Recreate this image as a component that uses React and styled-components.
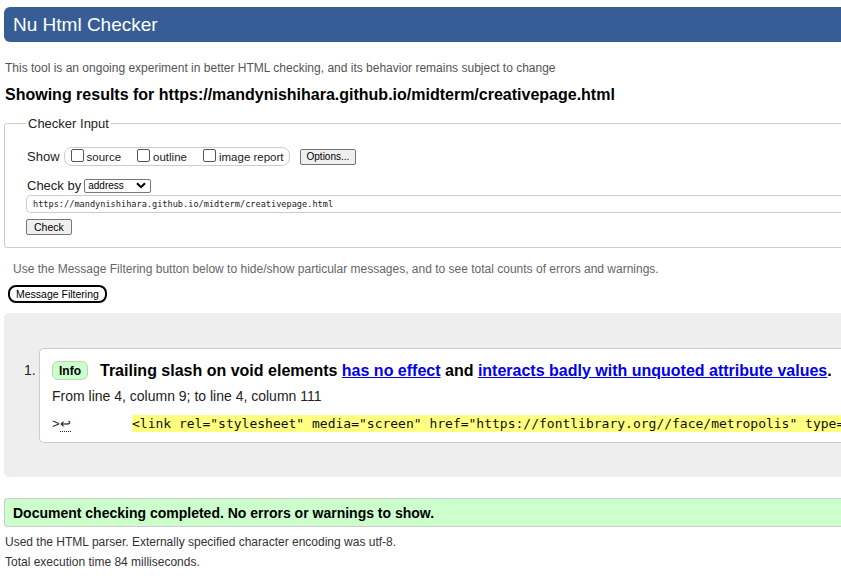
import React from 'react';
import styled, { createGlobalStyle } from 'styled-components';

const GlobalStyle = createGlobalStyle`
  html, body {
    margin: 0;
    padding: 0;
    background: #fff;
    overflow: hidden;
  }
  body {
    font-family: "Liberation Sans", Arial, sans-serif;
    color: #000;
  }
`;

const Page = styled.div`
  width: 1150px;
  padding: 7px 0 0 4px;
`;

const Header = styled.h1`
  margin: 0;
  height: 35px;
  display: flex;
  align-items: center;
  padding-left: 9px;
  background: #365d95;
  border-radius: 6px;
  color: #fff;
  font-size: 19px;
  font-weight: normal;
`;

const Tagline = styled.p`
  margin: 19px 0 0 1px;
  font-size: 12px;
  line-height: 14px;
  color: #555;
`;

const Showing = styled.h2`
  margin: 10px 0 0 1px;
  font-size: 16px;
  line-height: 20px;
  font-weight: bold;
`;

const Fieldset = styled.fieldset`
  margin: 11px 0 0;
  padding: 8px 0 12px 22px;
  border: 1px solid #ccc;
  border-radius: 3px;
`;

const Legend = styled.legend`
  padding: 0 2px;
  margin-left: -1px;
  font-size: 13px;
  line-height: 15px;
  color: #222;
`;

const Row = styled.div`
  display: flex;
  align-items: center;
  gap: ${(p) => p.$gap || 3}px;
  margin-top: ${(p) => p.$top || 0}px;
  font-size: 13px;
  color: #222;
`;

const ShowGroup = styled.div`
  display: flex;
  align-items: center;
  height: 17px;
  padding: 0 5px 0 6px;
  border: 1px solid #ccc;
  border-radius: 8px;
  gap: 16px;
`;

const CheckLabel = styled.label`
  display: flex;
  align-items: center;
  gap: 3px;
  font-size: 11.5px;
  color: #222;
`;

const Box = styled.span`
  width: 11px;
  height: 11px;
  border: 1px solid #555;
  border-radius: 2px;
  background: #fff;
  margin-top: -3px;
`;

const Button = styled.button`
  font-family: "Liberation Sans", Arial, sans-serif;
  font-size: ${(p) => p.$size || 10}px;
  height: 16px;
  padding: 0 ${(p) => p.$pad || 6}px;
  border: 1px solid #767676;
  border-radius: 2px;
  background: #efefef;
  color: #000;
  line-height: 14px;
`;

const Select = styled.div`
  display: flex;
  align-items: center;
  justify-content: space-between;
  box-sizing: border-box;
  width: 67px;
  height: 14px;
  padding: 0 4px 0 3px;
  border: 1px solid #767676;
  border-radius: 2px;
  font-size: 10px;
  color: #000;
`;

const UrlInput = styled.div`
  box-sizing: border-box;
  height: 18px;
  margin: 2px 0 0 -1px;
  padding-left: 6px;
  display: flex;
  align-items: center;
  border: 1px solid #ccc;
  border-right: none;
  border-radius: 5px 0 0 5px;
  font-family: "DejaVu Sans Mono", "Liberation Mono", monospace;
  font-size: 8.6px;
  color: #222;
`;

const CheckRow = styled.div`
  margin: 4px 0 0 -1px;
`;

const Hint = styled.p`
  margin: 14px 0 0 9px;
  font-size: 12px;
  line-height: 14px;
  color: #666;
`;

const FilterButton = styled.button`
  display: block;
  margin: 9px 0 0 4px;
  height: 18px;
  padding: 0 6px;
  border: 2px solid #000;
  border-radius: 8px;
  background: #fff;
  font-family: "Liberation Sans", Arial, sans-serif;
  font-size: 10.5px;
  color: #000;
`;

const Results = styled.div`
  margin-top: 10px;
  padding: 35px 0 34px 20px;
  background: #eee;
  border-radius: 5px 0 0 5px;
  display: flex;
  align-items: flex-start;
`;

const Num = styled.div`
  width: 15px;
  padding-top: 14px;
  font-size: 14px;
  color: #222;
`;

const Message = styled.div`
  flex: 1;
  box-sizing: border-box;
  height: 95px;
  padding: 12px 0 0 12px;
  background: #fff;
  border: 1px solid #ccc;
  border-right: none;
  border-radius: 5px 0 0 5px;
`;

const TitleRow = styled.div`
  display: flex;
  align-items: center;
  gap: 12px;
  font-size: 16px;
  font-weight: bold;
`;

const Badge = styled.span`
  display: inline-flex;
  align-items: center;
  justify-content: center;
  box-sizing: border-box;
  width: 36px;
  height: 19px;
  background: #ccffcc;
  border: 1px solid #b5d8b5;
  border-radius: 6px;
  font-size: 12px;
  font-weight: bold;
  color: #000;
`;

const Link = styled.a`
  color: #0000ee;
  text-decoration: underline;
`;

const Location = styled.div`
  margin-top: 8px;
  font-size: 14px;
  line-height: 17px;
  color: #222;
`;

const Extract = styled.div`
  display: flex;
  align-items: center;
  margin-top: 10px;
  height: 17px;
`;

const Marker = styled.span`
  width: 80px;
  font-size: 13px;
  color: #222;
  abbr {
    text-decoration: none;
    border-bottom: 1px dotted #222;
  }
`;

const Code = styled.code`
  background: #ffff80;
  height: 17px;
  line-height: 17px;
  font-family: "DejaVu Sans Mono", "Liberation Mono", monospace;
  font-size: 13px;
  white-space: pre;
  color: #111;
`;

const Success = styled.p`
  margin: 21px 0 0;
  box-sizing: border-box;
  height: 29px;
  padding-left: 8px;
  display: flex;
  align-items: center;
  background: #ccffcc;
  border: 1px solid #ccc;
  border-right: none;
  border-radius: 4px 0 0 4px;
  font-size: 14px;
  font-weight: bold;
`;

const Detail = styled.p`
  margin: ${(p) => p.$top}px 0 0 1px;
  font-size: 12px;
  line-height: 14px;
  color: #333;
`;

const Chevron = () => (
  <svg width="10" height="7" viewBox="0 0 10 7">
    <path d="M1 1.2 L5 5.2 L9 1.2" fill="none" stroke="#000" strokeWidth="2" />
  </svg>
);

export default function App() {
  return (
    <>
      <GlobalStyle />
      <Page>
        <Header>Nu Html Checker</Header>
        <Tagline>This tool is an ongoing experiment in better HTML checking, and its behavior remains subject to change</Tagline>
        <Showing>Showing results for https://mandynishihara.github.io/midterm/creativepage.html</Showing>

        <Fieldset>
          <Legend>Checker Input</Legend>
          <Row $gap={4} $top={8}>
            <span>Show</span>
            <ShowGroup>
              <CheckLabel><Box />source</CheckLabel>
              <CheckLabel><Box />outline</CheckLabel>
              <CheckLabel><Box />image report</CheckLabel>
            </ShowGroup>
            <Button style={{ marginLeft: 6 }}>Options...</Button>
          </Row>
          <Row $gap={3} $top={12}>
            <span>Check by</span>
            <Select>
              <span>address</span>
              <Chevron />
            </Select>
          </Row>
          <UrlInput>https://mandynishihara.github.io/midterm/creativepage.html</UrlInput>
          <CheckRow>
            <Button $size={10.5} $pad={7}>Check</Button>
          </CheckRow>
        </Fieldset>

        <Hint>Use the Message Filtering button below to hide/show particular messages, and to see total counts of errors and warnings.</Hint>
        <FilterButton>Message Filtering</FilterButton>

        <Results>
          <Num>1.</Num>
          <Message>
            <TitleRow>
              <Badge>Info</Badge>
              <span>
                Trailing slash on void elements <Link>has no effect</Link> and{' '}
                <Link>interacts badly with unquoted attribute values</Link>.
              </span>
            </TitleRow>
            <Location>From line 4, column 9; to line 4, column 111</Location>
            <Extract>
              <Marker>&gt;<abbr>↩</abbr></Marker>
              <Code>{'<link rel="stylesheet" media="screen" href="https://fontlibrary.org//face/metropolis" type="text/css"/>'}</Code>
            </Extract>
          </Message>
        </Results>

        <Success>Document checking completed. No errors or warnings to show.</Success>
        <Detail $top={8}>Used the HTML parser. Externally specified character encoding was utf-8.</Detail>
        <Detail $top={6}>Total execution time 84 milliseconds.</Detail>
      </Page>
    </>
  );
}
